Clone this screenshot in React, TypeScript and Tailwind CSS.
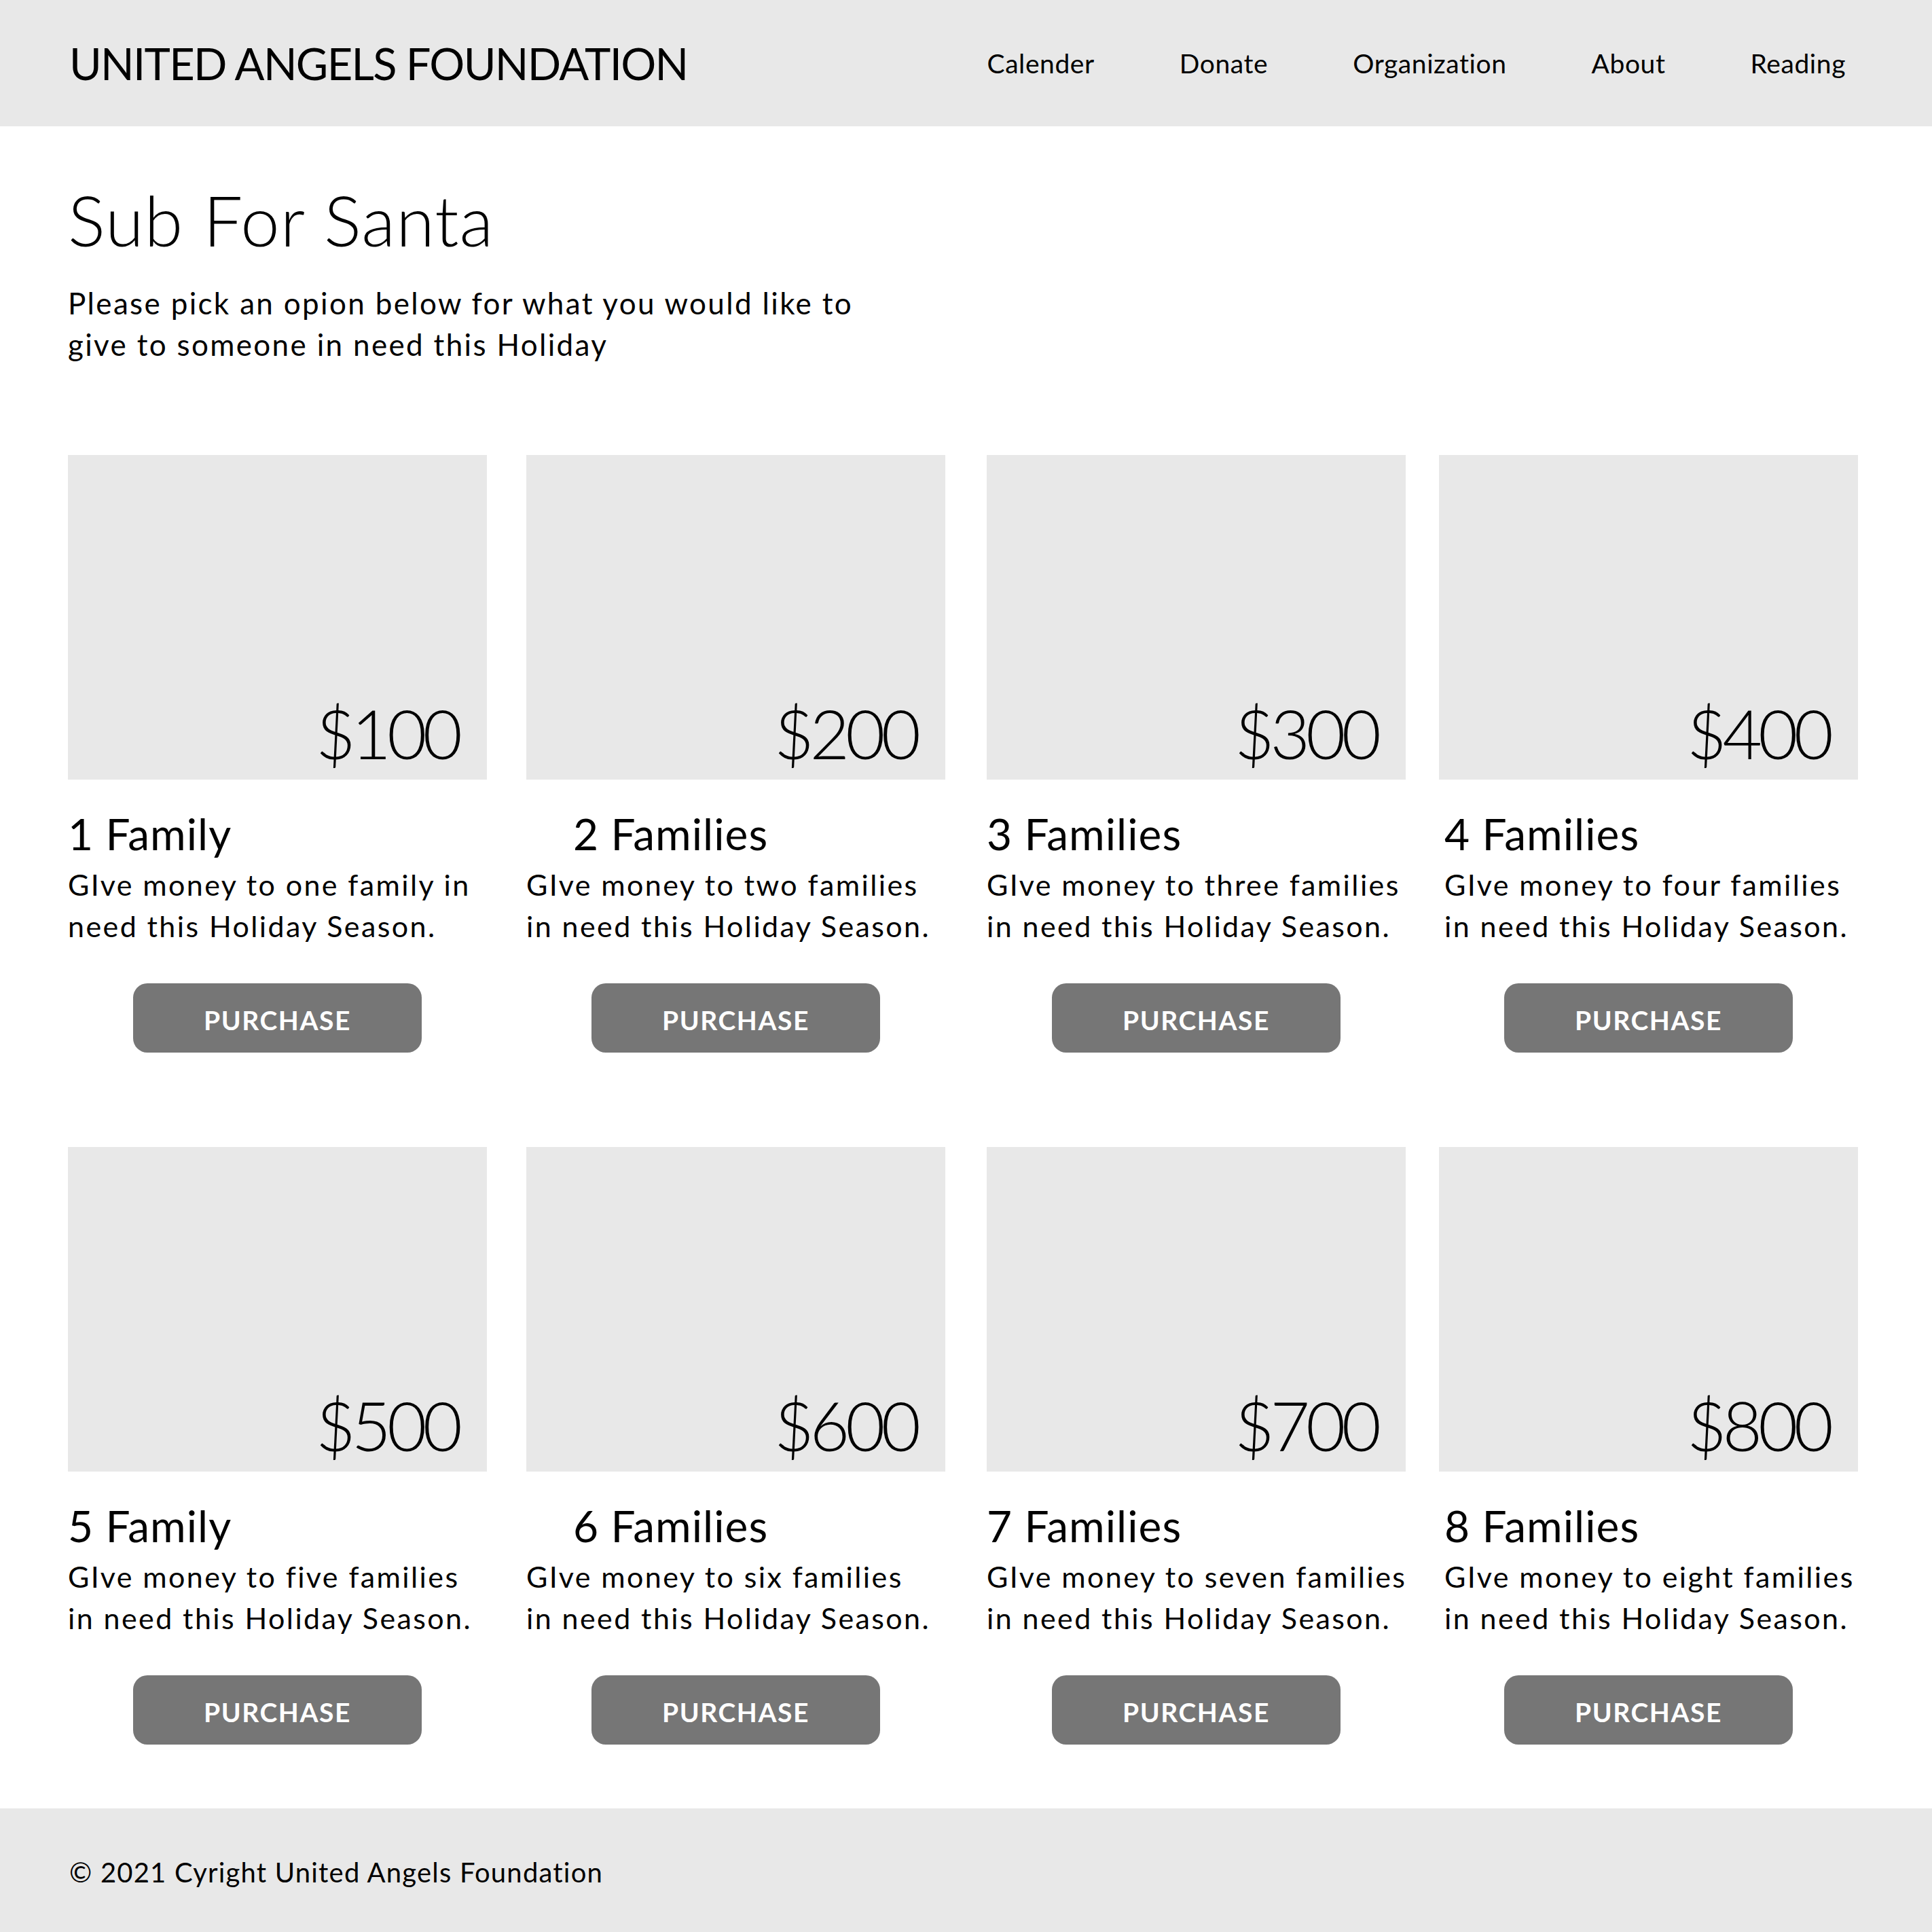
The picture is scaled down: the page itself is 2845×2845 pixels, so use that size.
import React from 'react';

const navLinks = ['Calender', 'Donate', 'Organization', 'About', 'Reading'];

const options = [
  { price: '$100', title: '1 Family', text: ['GIve money to one family in', 'need this Holiday Season.'] },
  { price: '$200', title: '2 Families', text: ['GIve money to two families', 'in need this Holiday Season.'] },
  { price: '$300', title: '3 Families', text: ['GIve money to three families', 'in need this Holiday Season.'] },
  { price: '$400', title: '4 Families', text: ['GIve money to four families', 'in need this Holiday Season.'] },
  { price: '$500', title: '5 Family', text: ['GIve money to five families', 'in need this Holiday Season.'] },
  { price: '$600', title: '6 Families', text: ['GIve money to six families', 'in need this Holiday Season.'] },
  { price: '$700', title: '7 Families', text: ['GIve money to seven families', 'in need this Holiday Season.'] },
  { price: '$800', title: '8 Families', text: ['GIve money to eight families', 'in need this Holiday Season.'] },
];

// column offsets in the mockup aren't evenly spaced
const colOffset = ['', 'ml-[58px]', 'ml-[61px]', 'ml-[49px]'];
const titleIndent = ['', 'pl-[69px]', '', 'pl-[8px]'];
const textIndent = ['', '', '', 'pl-[8px]'];

const OptionCard = ({ option, col }: { option: typeof options[number]; col: number }) => (
  <div className={`w-[617px] shrink-0 ${colOffset[col]}`}>
    <div className="h-[478px] bg-[#e8e8e8] flex items-end justify-end pr-[42px] pb-[18px]">
      <span className="text-[101px] leading-none font-light tracking-[-0.06em]">{option.price}</span>
    </div>
    <h3 className={`mt-[48px] text-[64px] leading-none font-normal tracking-[0.016em] ${titleIndent[col]}`}>
      {option.title}
    </h3>
    <p className={`mt-[12px] text-[43px] leading-[61px] tracking-[0.056em] whitespace-nowrap ${textIndent[col]}`}>
      {option.text[0]}
      <br />
      {option.text[1]}
    </p>
    <button className="mt-[54px] mx-auto flex items-center justify-center w-[425px] h-[102px] pt-[6px] rounded-[21px] bg-[#767676] text-white text-[39px] font-bold tracking-[0.04em] leading-none">
      PURCHASE
    </button>
  </div>
);

export default function App() {
  const rows = [options.slice(0, 4), options.slice(4, 8)];

  return (
    <div className="w-[2845px] min-h-[2845px] bg-white text-black [font-family:Lato,sans-serif] flex flex-col">
      {/* Header */}
      <header className="h-[186px] bg-[#e8e8e8] flex items-center justify-between pl-[102px] pr-[127px] shrink-0">
        <div className="text-[65px] leading-none font-normal tracking-[-0.026em]">UNITED ANGELS FOUNDATION</div>
        <nav className="flex items-center gap-[125px]">
          {navLinks.map((link) => (
            <a key={link} className="text-[39px] leading-none tracking-[0.015em]">
              {link}
            </a>
          ))}
        </nav>
      </header>

      {/* Main */}
      <main className="flex-1 px-[100px]">
        <h1 className="mt-[86px] text-[103px] leading-none font-light tracking-[0.01em]">Sub For Santa</h1>
        <p className="mt-[41px] text-[44px] leading-[61px] tracking-[0.053em] whitespace-nowrap">
          Please pick an opion below for what you would like to
          <br />
          give to someone in need this Holiday
        </p>

        <div className="mt-[132px] flex flex-col gap-[139px]">
          {rows.map((row, i) => (
            <div key={i} className="flex">
              {row.map((opt, col) => (
                <OptionCard key={opt.price} option={opt} col={col} />
              ))}
            </div>
          ))}
        </div>
      </main>

      {/* Footer */}
      <footer className="mt-[93px] h-[182px] bg-[#e8e8e8] flex items-center px-[102px] pt-[6px] shrink-0">
        <span className="text-[40px] leading-none tracking-[0.03em]">© 2021 Cyright United Angels Foundation</span>
      </footer>
    </div>
  );
}
